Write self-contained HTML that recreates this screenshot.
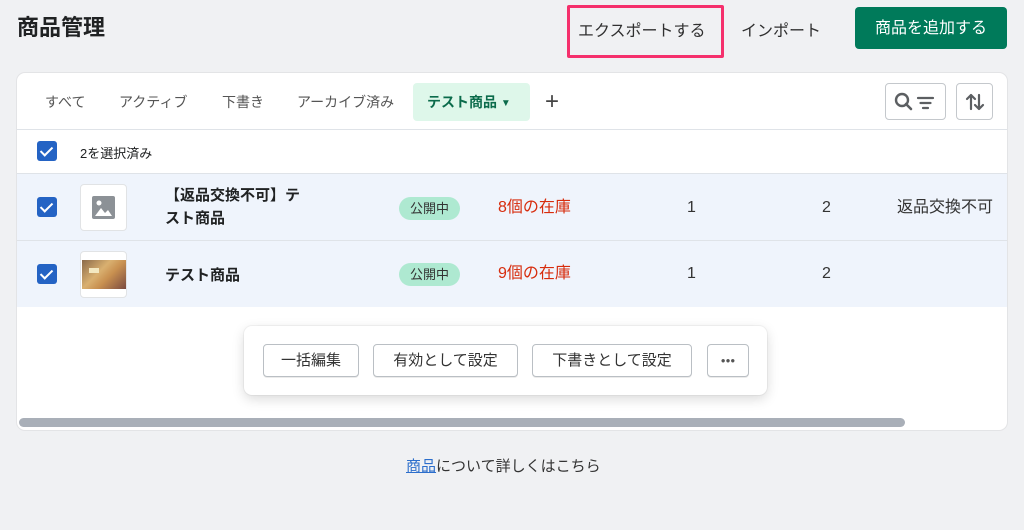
<!DOCTYPE html>
<html><head><meta charset="utf-8"><style>
*{box-sizing:border-box;margin:0;padding:0}
body{width:1024px;height:530px;background:#f0f1f3;font-family:"Liberation Sans","Noto Sans CJK JP",sans-serif;color:#202223;position:relative;overflow:hidden}
.a{position:absolute}
.title{left:17px;top:12px;font-size:22px;font-weight:bold;line-height:32px}
.exp{left:567px;top:5px;width:157px;height:53px;border:3px solid #f5306c;border-radius:2px}
.t15{font-size:16px;color:#303030}
.add{left:855px;top:7px;width:152px;height:42px;background:#007a5a;border-radius:4px;color:#fff;font-size:16px;text-align:center;line-height:44px}
.card{left:17px;top:73px;width:990px;height:357px;background:#fff;border-radius:8px;box-shadow:0 0 0 1px #e3e4e6;overflow:hidden}
.tab{top:21px;font-size:14px;color:#555;line-height:16px}
.cb{width:20px;height:20px;background:#2463c4;border-radius:3px}
.cb:after{content:"";position:absolute;left:6px;top:3px;width:5px;height:10px;border:solid #fff;border-width:0 2px 2px 0;transform:rotate(45deg)}
.row{left:0;width:990px;background:#eff4fc;border-top:1px solid #dfe3e8}
.badge{width:61px;height:23px;background:#aee9d1;border-radius:12px;font-size:13px;text-align:center;line-height:23px;color:#333}
.stock{font-size:16px;color:#d72c0d;line-height:20px}
.num{font-size:16px;color:#333;line-height:20px}
.btn{top:18px;height:33px;border:1px solid #babfc4;border-radius:4px;background:#fff;font-size:15px;line-height:31px;text-align:center;color:#333;box-shadow:0 1px 0 rgba(0,0,0,.08)}
</style></head><body>
<div class="a title">商品管理</div>
<div class="a exp"></div>
<div class="a t15" style="left:578px;top:17px">エクスポートする</div>
<div class="a t15" style="left:741px;top:17px">インポート</div>
<div class="a add">商品を追加する</div>
<div class="a card">
  <div class="a tab" style="left:28px">すべて</div>
  <div class="a tab" style="left:102px">アクティブ</div>
  <div class="a tab" style="left:205px">下書き</div>
  <div class="a tab" style="left:280px">アーカイブ済み</div>
  <div class="a" style="left:396px;top:10px;width:117px;height:38px;background:#def7ea;border-radius:4px"></div>
  <div class="a tab" style="left:410px;color:#0b6b4b;font-weight:bold">テスト商品 <span style="font-size:10px;vertical-align:1px">▼</span></div>
  <div class="a" style="left:528px;top:16px;font-size:24px;color:#444;line-height:26px">+</div>
  <div class="a" style="left:868px;top:10px;width:61px;height:37px;border:1px solid #c4c8cc;border-radius:4px">
    <svg class="a" style="left:8px;top:8px" width="46" height="20" viewBox="0 0 46 20"><circle cx="8" cy="8" r="6" fill="none" stroke="#5c5f62" stroke-width="2.4"/><path d="M12 12l5 5" stroke="#5c5f62" stroke-width="2.6" stroke-linecap="round"/><path d="M24 6h15M26.5 11h10M29 16h5" stroke="#5c5f62" stroke-width="2.2" stroke-linecap="round"/></svg>
  </div>
  <div class="a" style="left:939px;top:10px;width:37px;height:37px;border:1px solid #c4c8cc;border-radius:4px">
    <svg class="a" style="left:8px;top:8px" width="20" height="20" viewBox="0 0 20 20"><path d="M6 17V3M2 7l4-4 4 4M14 3v14M10 13l4 4 4-4" fill="none" stroke="#5c5f62" stroke-width="2.2" stroke-linecap="round" stroke-linejoin="round"/></svg>
  </div>
  <div class="a" style="left:0;top:56px;width:990px;height:1px;background:#dfe3e8"></div>
  <div class="a cb" style="left:20px;top:68px"></div>
  <div class="a" style="left:63px;top:70px;font-size:13px">2を選択済み</div>
  <div class="a row" style="top:100px;height:68px">
    <div class="a cb" style="left:20px;top:23px"></div>
    <div class="a" style="left:63px;top:10px;width:47px;height:47px;background:#fff;border:1px solid #e1e3e5;border-radius:4px">
      <svg class="a" style="left:11px;top:11px" width="23" height="23" viewBox="0 0 23 23"><rect width="23" height="23" rx="2" fill="#8c9196"/><circle cx="7" cy="7" r="2.5" fill="#fff"/><path d="M3 20l6-8 4 5 3-3 4 6z" fill="#fff"/></svg>
    </div>
    <div class="a" style="left:148px;top:10px;font-size:15px;font-weight:bold;line-height:23px;white-space:nowrap">【返品交換不可】テ<br>スト商品</div>
    <div class="a badge" style="left:382px;top:23px">公開中</div>
    <div class="a stock" style="left:481px;top:24px">8個の在庫</div>
    <div class="a num" style="left:670px;top:24px">1</div>
    <div class="a num" style="left:805px;top:24px">2</div>
    <div class="a num" style="left:880px;top:24px">返品交換不可</div>
  </div>
  <div class="a row" style="top:167px;height:67px">
    <div class="a cb" style="left:20px;top:23px"></div>
    <div class="a" style="left:63px;top:10px;width:47px;height:47px;background:#fff;border:1px solid #e1e3e5;border-radius:4px;overflow:hidden">
      <div class="a" style="left:1px;top:8px;width:44px;height:29px;background:linear-gradient(135deg,#8a6a4a,#d9b070 40%,#c89050 60%,#7a4a40)"></div>
      <div class="a" style="left:8px;top:16px;width:10px;height:5px;background:#f3e8c0"></div>
    </div>
    <div class="a" style="left:148px;top:23px;font-size:15px;font-weight:bold">テスト商品</div>
    <div class="a badge" style="left:382px;top:22px">公開中</div>
    <div class="a stock" style="left:481px;top:23px">9個の在庫</div>
    <div class="a num" style="left:670px;top:23px">1</div>
    <div class="a num" style="left:805px;top:23px">2</div>
  </div>
  <div class="a" style="left:227px;top:253px;width:523px;height:69px;background:#fff;border-radius:8px;box-shadow:0 4px 12px rgba(0,0,0,.15),0 0 0 1px rgba(0,0,0,.04)">
    <div class="a btn" style="left:19px;width:96px">一括編集</div>
    <div class="a btn" style="left:129px;width:145px">有効として設定</div>
    <div class="a btn" style="left:288px;width:160px">下書きとして設定</div>
    <div class="a btn" style="left:463px;width:42px;font-size:8px;letter-spacing:0px;color:#555">●●●</div>
  </div>
  <div class="a" style="left:2px;top:345px;width:886px;height:9px;background:#a9afb8;border-radius:5px"></div>
</div>
<div class="a" style="left:406px;top:455px;font-size:15px;color:#333"><span style="color:#2c6ecb;text-decoration:underline">商品</span>について詳しくはこちら</div>
</body></html>
